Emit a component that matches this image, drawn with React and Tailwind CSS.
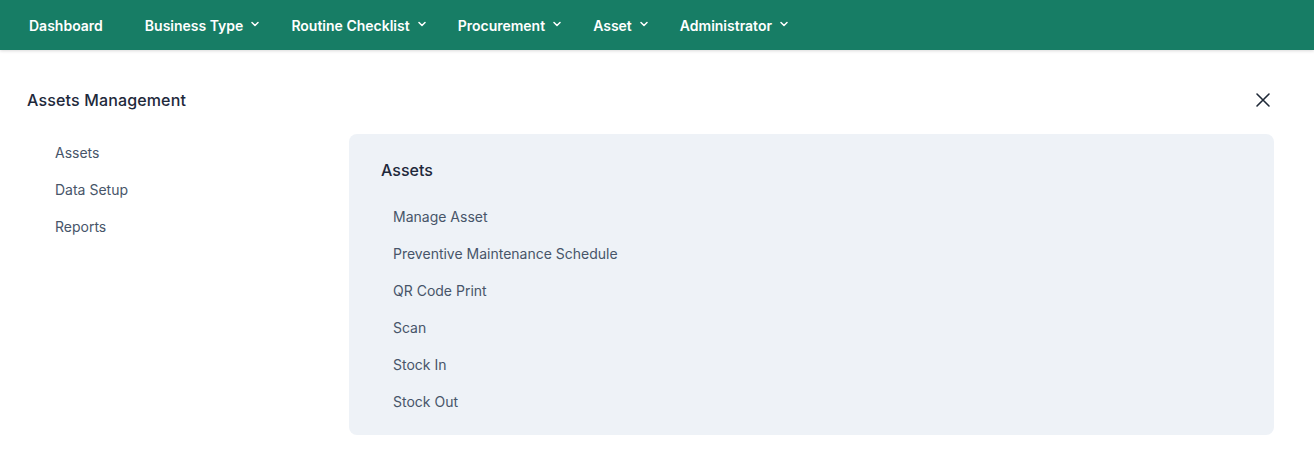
import React from "react";

const Chevron = () => (
  <svg width="8" height="6" viewBox="0 0 8 6" className="ml-[8px] mt-[-3px]" fill="none">
    <path d="M1 1.5 L4 4.5 L7 1.5" stroke="currentColor" strokeWidth="1.5" strokeLinecap="round" strokeLinejoin="round" />
  </svg>
);

const navItems = [
  { label: "Dashboard", chevron: false },
  { label: "Business Type", chevron: true },
  { label: "Routine Checklist", chevron: true },
  { label: "Procurement", chevron: true },
  { label: "Asset", chevron: true },
  { label: "Administrator", chevron: true },
];

export default function App() {
  return (
    <div className="w-[1314px] h-[470px] bg-white" style={{ fontFamily: "Inter, 'Noto Sans', sans-serif" }}>
      <nav className="h-[50px] bg-[#177d65] flex items-center pl-[29px] shadow-[0_1px_3px_rgba(0,0,0,0.15)]">
        <div className="flex items-center gap-[32px]">
          {navItems.map((it, i) => (
            <div key={i} className={`flex items-center text-white text-[14px] font-semibold ${i === 0 ? "mr-[10px]" : ""}`}>
              <span>{it.label}</span>
              {it.chevron && <Chevron />}
            </div>
          ))}
        </div>
      </nav>
      <div className="px-[27px] pt-[40px]">
        <div className="flex items-center justify-between h-[20px]">
          <h2 className="text-[16px] font-medium text-[#1e293b] tracking-[0.15px]">Assets Management</h2>
          <svg width="16" height="16" viewBox="0 0 16 16" className="mr-[16px]" fill="none">
            <path d="M2 2 L14 14 M14 2 L2 14" stroke="#1f2937" strokeWidth="1.6" strokeLinecap="round" />
          </svg>
        </div>
        <div className="flex mt-[24px]">
          <div className="w-[322px] pl-[28px] pt-[9px] flex flex-col gap-[17px]">
            {["Assets", "Data Setup", "Reports"].map((t) => (
              <div key={t} className="text-[14px] text-[#475569] leading-[20px]">{t}</div>
            ))}
          </div>
          <div className="w-[925px] h-[301px] bg-[#eef2f7] rounded-[8px] pl-[32px] pt-[26px]">
            <div className="text-[16px] font-medium text-[#1e293b] leading-[20px]">Assets</div>
            <div className="flex flex-col gap-[17px] mt-[27px] pl-[12px]">
              {["Manage Asset", "Preventive Maintenance Schedule", "QR Code Print", "Scan", "Stock In", "Stock Out"].map((t) => (
                <div key={t} className="text-[14px] text-[#475569] leading-[20px]">{t}</div>
              ))}
            </div>
          </div>
        </div>
      </div>
    </div>
  );
}
